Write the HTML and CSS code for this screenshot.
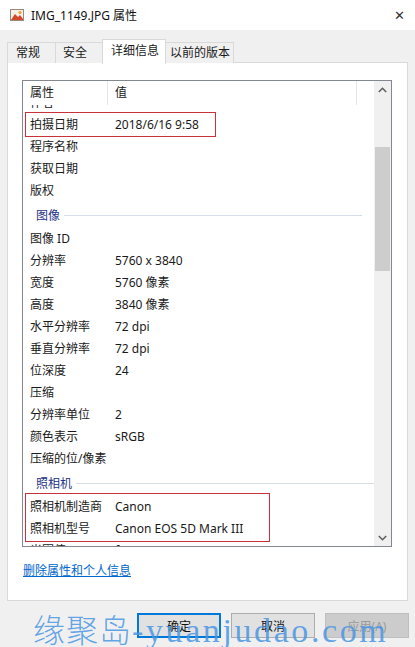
FILE: index.html
```html
<!DOCTYPE html>
<html lang="zh-CN">
<head>
  <meta charset="UTF-8" />
  <title>IMG_1149.JPG 属性</title>
  <link rel="stylesheet" href="styles.css">
</head>
<body>
  <div class="window">
    <div class="titlebar">
      <svg class="file-icon" width="14" height="12" viewBox="0 0 14 12">
        <rect x="0.5" y="0.5" width="13" height="11" fill="#f4efe6" stroke="#9a8a78"/>
        <path d="M1 11 L5 5 L8 8 L10 6 L13 10 L13 11 Z" fill="#d4462a"/>
        <circle cx="10" cy="3.5" r="1.5" fill="#f0a030"/>
      </svg>
      <span class="title">IMG_1149.JPG 属性</span>
      <span class="close">&#x2715;</span>
    </div>

    <div class="tabs">
      <div class="tab tab-general">常规</div>
      <div class="tab tab-security">安全</div>
      <div class="tab tab-active">详细信息</div>
      <div class="tab tab-prev">以前的版本</div>
    </div>

    <div class="panel">
      <div class="list">
        <div class="list-main">
          <div class="list-head">
            <div class="col-name">属性</div>
            <div class="col-value">值</div>
            <div class="col-rest"></div>
          </div>
          <div class="list-body">
            <div class="rows">
              <div class="row"><span class="name">作者</span><span class="value"></span></div>
              <div class="row"><span class="name">拍摄日期</span><span class="value">2018/6/16 9:58</span></div>
              <div class="row"><span class="name">程序名称</span><span class="value"></span></div>
              <div class="row"><span class="name">获取日期</span><span class="value"></span></div>
              <div class="row"><span class="name">版权</span><span class="value"></span></div>
              <div class="group"><span>图像</span><i></i></div>
              <div class="row"><span class="name">图像 ID</span><span class="value"></span></div>
              <div class="row"><span class="name">分辨率</span><span class="value">5760 x 3840</span></div>
              <div class="row"><span class="name">宽度</span><span class="value">5760 像素</span></div>
              <div class="row"><span class="name">高度</span><span class="value">3840 像素</span></div>
              <div class="row"><span class="name">水平分辨率</span><span class="value">72 dpi</span></div>
              <div class="row"><span class="name">垂直分辨率</span><span class="value">72 dpi</span></div>
              <div class="row"><span class="name">位深度</span><span class="value">24</span></div>
              <div class="row"><span class="name">压缩</span><span class="value"></span></div>
              <div class="row"><span class="name">分辨率单位</span><span class="value">2</span></div>
              <div class="row"><span class="name">颜色表示</span><span class="value">sRGB</span></div>
              <div class="row"><span class="name">压缩的位/像素</span><span class="value"></span></div>
              <div class="group"><span>照相机</span><i></i></div>
              <div class="row"><span class="name">照相机制造商</span><span class="value">Canon</span></div>
              <div class="row"><span class="name">照相机型号</span><span class="value">Canon EOS 5D Mark III</span></div>
              <div class="row"><span class="name">光圈值</span><span class="value">f/4</span></div>
            </div>
          </div>
        </div>
        <div class="scrollbar">
          <div class="arrow">
            <svg width="9" height="6" viewBox="0 0 9 6"><path d="M0.8 5 L4.5 1.3 L8.2 5" fill="none" stroke="#606060" stroke-width="1.6"/></svg>
          </div>
          <div class="track">
            <div class="thumb"></div>
          </div>
          <div class="arrow">
            <svg width="9" height="6" viewBox="0 0 9 6"><path d="M0.8 1 L4.5 4.7 L8.2 1" fill="none" stroke="#606060" stroke-width="1.6"/></svg>
          </div>
        </div>
        <div class="mark mark-date"></div>
        <div class="mark mark-camera"></div>
      </div>

      <a class="remove-link" href="#">删除属性和个人信息</a>
    </div>

    <div class="buttons">
      <button class="btn btn-default">确定</button>
      <button class="btn">取消</button>
      <button class="btn btn-disabled">应用(A)</button>
    </div>

    <div class="watermark">缘聚岛<span>-yuanjudao.com</span></div>
  </div>
</body>
</html>
```

FILE: styles.css
```css
* {
  box-sizing: border-box;
}

body {
  margin: 0;
  font-family: "Noto Sans", "Noto Sans CJK SC", sans-serif;
  font-size: 12px;
  color: #1a1a1a;
  background: #f0f0f0;
}

.window {
  position: relative;
  width: 415px;
  height: 647px;
  overflow: hidden;
  background: #f0f0f0;
}

.titlebar {
  height: 30px;
  background: #fff;
  display: flex;
  align-items: center;
  padding: 0 10px;
}

.file-icon {
  margin-right: 7px;
}

.title {
  flex-grow: 1;
  font-size: 12px;
  color: #111;
}

.close {
  font-size: 13px;
  color: #333;
}

.tabs {
  display: flex;
  align-items: flex-end;
  height: 33px;
  padding-left: 7px;
  position: relative;
  z-index: 1;
}

.tab {
  height: 21px;
  line-height: 19px;
  border: 1px solid #d9d9d9;
  border-bottom: none;
  background: #f0f0f0;
  padding-left: 8px;
}

.tab + .tab {
  margin-left: -1px;
}

.tab-general {
  width: 49px;
}

.tab-security {
  width: 48px;
  padding-left: 7px;
}

.tab-active {
  width: 64px;
  height: 25px;
  line-height: 21px;
  background: #fff;
  margin-bottom: -1px;
  position: relative;
}

.tab-prev {
  width: 69px;
  padding-left: 4px;
}

.panel {
  margin: -1px 7px 0 7px;
  height: 539px;
  background: #fff;
  border: 1px solid #d9d9d9;
  padding: 17px 0 0 14px;
}

.list {
  position: relative;
  width: 370px;
  height: 467px;
  border: 1px solid #828790;
  display: flex;
}

.list-main {
  flex-grow: 1;
  display: flex;
  flex-direction: column;
  min-width: 0;
}

.list-head {
  height: 24px;
  display: flex;
  background: #fff;
  position: relative;
  z-index: 1;
}

.list-head div {
  line-height: 24px;
  padding-left: 7px;
}

.col-name {
  width: 85px;
  border-right: 1px solid #e5e5e5;
}

.col-value {
  width: 249px;
  border-right: 1px solid #e5e5e5;
}

.col-rest {
  flex-grow: 1;
}

.list-body {
  flex-grow: 1;
  overflow: hidden;
}

.rows {
  margin-top: -13px;
}

.row {
  height: 22px;
  line-height: 22px;
  display: flex;
  padding-left: 7px;
  white-space: nowrap;
}

.row .name {
  width: 85px;
}

.group {
  height: 26px;
  display: flex;
  align-items: center;
  padding-left: 13px;
  color: #1e3287;
}

.group i {
  height: 1px;
  width: 298px;
  background: #d5dde8;
  margin-left: 4px;
}

.scrollbar {
  width: 17px;
  background: #f0f0f0;
  display: flex;
  flex-direction: column;
}

.arrow {
  height: 17px;
  display: flex;
  align-items: center;
  justify-content: center;
}

.track {
  flex-grow: 1;
  padding-top: 49px;
}

.thumb {
  height: 124px;
  margin: 0 1px;
  background: #cdcdcd;
}

.mark {
  position: absolute;
  left: 2px;
  border: 1px solid #c8323c;
  z-index: 2;
}

.mark-date {
  top: 31px;
  width: 191px;
  height: 25px;
}

.mark-camera {
  top: 412px;
  width: 245px;
  height: 49px;
  border-color: #c8323c;
}

.remove-link {
  display: inline-block;
  margin-top: 14px;
  margin-left: 1px;
  color: #0066cc;
  text-decoration: underline;
}

.buttons {
  display: flex;
  justify-content: flex-end;
  gap: 10px;
  padding: 12px 6px 0 0;
}

.btn {
  width: 84px;
  height: 25px;
  font-family: "Noto Sans", "Noto Sans CJK SC", sans-serif;
  font-size: 12px;
  color: #111;
  background: #e1e1e1;
  border: 1px solid #adadad;
  padding: 0;
}

.btn-default {
  border: 2px solid #0078d7;
}

.btn-disabled {
  background: #cccccc;
  border-color: #bfbfbf;
  color: #9a9a9a;
}

.watermark {
  position: absolute;
  left: 33px;
  bottom: -4px;
  font-family: "Noto Sans CJK SC", sans-serif;
  font-weight: 300;
  font-size: 32px;
  letter-spacing: 1px;
  color: rgba(74, 150, 228, 0.85);
  white-space: nowrap;
  z-index: 3;
}

.watermark span {
  font-family: "Liberation Serif", serif;
  font-size: 34px;
  letter-spacing: 2.6px;
}
```
